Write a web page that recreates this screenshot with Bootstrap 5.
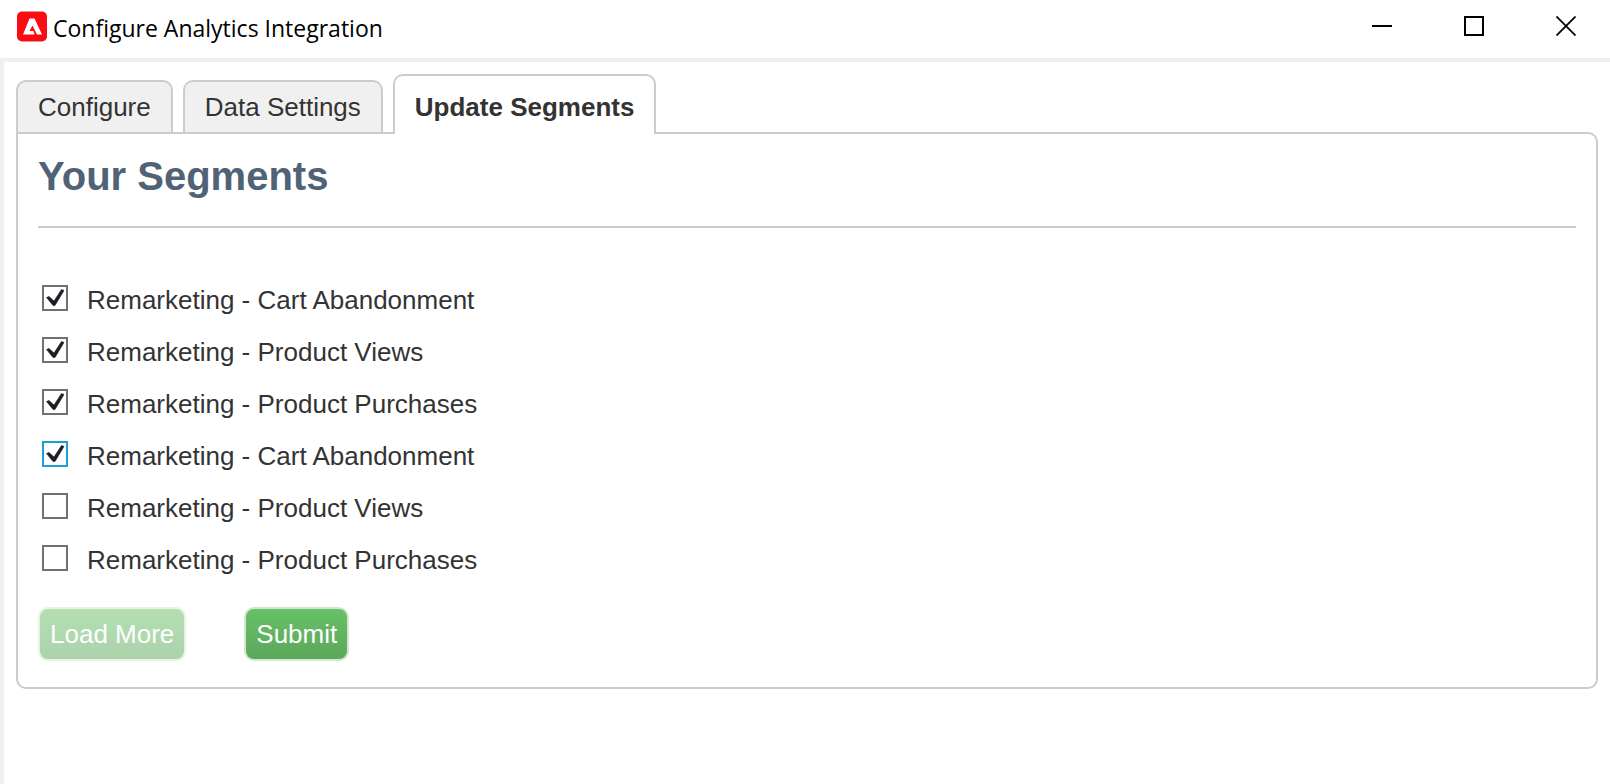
<!DOCTYPE html>
<html lang="en">
<head>
<meta charset="utf-8">
<meta name="viewport" content="width=device-width, initial-scale=1">
<title>Configure Analytics Integration</title>
<link href="https://cdn.jsdelivr.net/npm/bootstrap@5.3.0/dist/css/bootstrap.min.css" rel="stylesheet">
<style>
  body {
    font-family: "Liberation Sans", Arial, sans-serif;
    font-size: 26px;
    line-height: 32px;
    color: #333;
    background: #fff;
  }
  .title-bar { height: 58px; padding-left: 16px; }
  .app-title {
    font: 400 23px/32px "Open Sans", "Segoe UI", sans-serif;
    color: #000;
    margin: 0 0 0 6px;
  }
  .window-controls { margin-right: -2px; }
  .window-btn {
    width: 92px;
    height: 52px;
    padding: 0;
    border: 0;
    background: none;
  }
  .window-btn svg { display: block; margin: 0 auto; }
  .window-body {
    border: solid #f0f0f0;
    border-width: 4px 0 0 4px;
    padding: 12px 12px 0 12px;
  }
  .segment-tabs { --bs-nav-tabs-border-width: 0; gap: 10px; }
  .segment-tabs .nav-link {
    position: relative;
    margin: 0;
    padding: 8px 20px;
    border: 2px solid #ccc;
    border-bottom: 0;
    border-radius: 10px 10px 0 0;
    background: #f0f0f0;
    color: #333;
    line-height: 34px;
  }
  .segment-tabs .nav-link.active {
    margin-bottom: -2px;
    padding: 14px 20px 10px;
    border-color: #ccc;
    background: #fff;
    color: #333;
    font-weight: 700;
    z-index: 1;
  }
  .segment-panel {
    border: 2px solid #ccc;
    border-radius: 0 10px 10px 10px;
    padding: 20px 20px 26px;
  }
  .segment-panel h1 {
    margin: 0;
    padding-bottom: 28px;
    border-bottom: 2px solid #ccc;
    font-size: 40px;
    line-height: 44px;
    font-weight: 700;
    color: #4f6276;
  }
  .segment-list { margin: 46px 0 21px; padding: 0 4px; }
  .segment-row { height: 52px; gap: 19px; }
  .segment-row .form-check-input {
    flex: none;
    width: 26px;
    height: 26px;
    margin: 0 0 5px;
    border: 2px solid #707070;
    border-radius: 0;
    background-color: #fff;
    background-size: 22px 22px;
    box-shadow: none;
  }
  .segment-row .form-check-input:checked {
    background-image: url("data:image/svg+xml,%3Csvg xmlns='http://www.w3.org/2000/svg' viewBox='0 0 22 22'%3E%3Cpath d='M2.500 10.500L5 9.500L10 14L17.500 2.500L20 3.500L11 18.500L9 18.500Z' fill='%231c1c24' stroke='%231c1c24' stroke-width='.6'/%3E%3C/svg%3E");
  }
  .segment-row .form-check-input.is-current { border-color: #1a9fda; }
  .btn-segment {
    padding: 8px 10px;
    border: 2px solid #d3e8cb;
    border-radius: 10px;
    background: linear-gradient(#68c268, #5ba65b) border-box;
    color: #fff;
    font-size: 26px;
    line-height: 34px;
  }
  .btn-segment:hover { color: #fff; border-color: #d3e8cb; }
  .btn-segment:disabled { color: #fff; border-color: #d3e8cb; opacity: .5; }
  .action-row { gap: 58px; }
</style>
</head>
<body class="d-flex flex-column min-vh-100">
<header class="title-bar d-flex align-items-start">
  <div class="d-flex align-items-center pt-2">
    <svg width="31" height="36" viewBox="0 0 31 36" aria-hidden="true">
      <rect x="1" y="3.500" width="30" height="30" rx="5" fill="#fb0b14"/>
      <path d="M13.500 10.500h5l7.500 16h-5l-4.500-9-3 5.500h4l1 3.500H7z" fill="#fff"/>
    </svg>
    <h2 class="app-title pt-1">Configure Analytics Integration</h2>
  </div>
  <div class="window-controls d-flex ms-auto">
    <button class="window-btn" type="button" aria-label="Minimize"><svg width="20" height="20"><path d="M0 10h20" stroke="#000" stroke-width="2"/></svg></button>
    <button class="window-btn" type="button" aria-label="Maximize"><svg width="20" height="20"><rect x="1" y="1" width="18" height="18" fill="none" stroke="#000" stroke-width="2"/></svg></button>
    <button class="window-btn" type="button" aria-label="Close"><svg width="20" height="20"><path d="M.5.5l19 19M19.500.5l-19 19" stroke="#000" stroke-width="1.8"/></svg></button>
  </div>
</header>
<main class="window-body flex-grow-1">
  <ul class="nav nav-tabs segment-tabs align-items-end" role="tablist">
    <li class="nav-item"><a class="nav-link" href="#configure" role="tab">Configure</a></li>
    <li class="nav-item"><a class="nav-link" href="#data-settings" role="tab">Data Settings</a></li>
    <li class="nav-item"><a class="nav-link active" href="#update-segments" role="tab" aria-selected="true">Update Segments</a></li>
  </ul>
  <form class="segment-panel" id="update-segments">
    <h1>Your Segments</h1>
    <div class="segment-list">
      <div class="segment-row d-flex align-items-center"><input class="form-check-input" type="checkbox" id="seg1" checked><label for="seg1">Remarketing - Cart Abandonment</label></div>
      <div class="segment-row d-flex align-items-center"><input class="form-check-input" type="checkbox" id="seg2" checked><label for="seg2">Remarketing - Product Views</label></div>
      <div class="segment-row d-flex align-items-center"><input class="form-check-input" type="checkbox" id="seg3" checked><label for="seg3">Remarketing - Product Purchases</label></div>
      <div class="segment-row d-flex align-items-center"><input class="form-check-input is-current" type="checkbox" id="seg4" checked><label for="seg4">Remarketing - Cart Abandonment</label></div>
      <div class="segment-row d-flex align-items-center"><input class="form-check-input" type="checkbox" id="seg5"><label for="seg5">Remarketing - Product Views</label></div>
      <div class="segment-row d-flex align-items-center"><input class="form-check-input" type="checkbox" id="seg6"><label for="seg6">Remarketing - Product Purchases</label></div>
    </div>
    <div class="action-row d-flex">
      <button class="btn btn-segment" type="button" disabled>Load More</button>
      <button class="btn btn-segment" type="submit">Submit</button>
    </div>
  </form>
</main>
<script src="https://cdn.jsdelivr.net/npm/bootstrap@5.3.0/dist/js/bootstrap.bundle.min.js"></script>
</body>
</html>
